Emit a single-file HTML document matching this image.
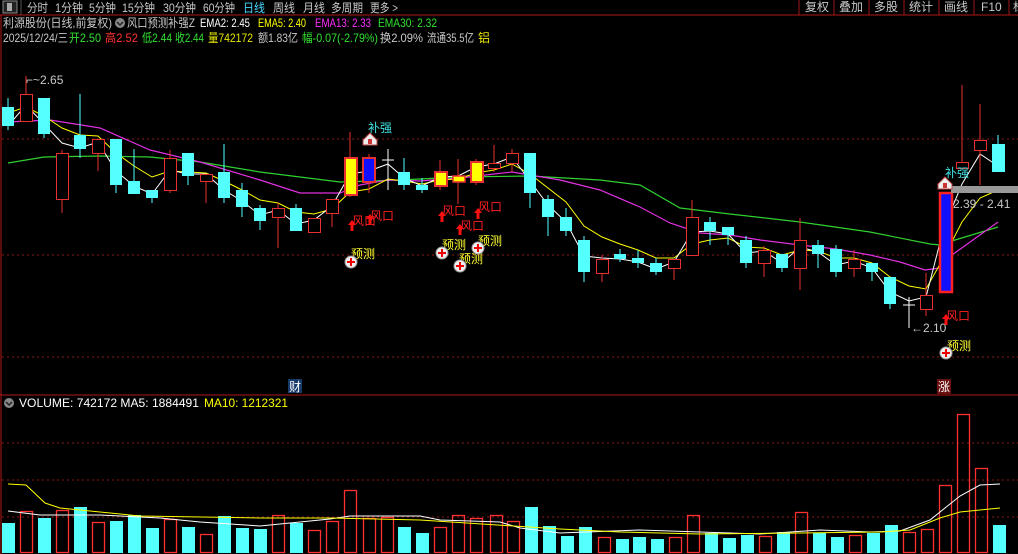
<!DOCTYPE html>
<html><head><meta charset="utf-8"><style>
html,body{margin:0;padding:0;background:#000;width:1018px;height:554px;overflow:hidden}
svg{display:block}
text{font-family:"Liberation Sans","Noto Sans CJK SC",sans-serif;font-size:12px}
</style></head><body>
<svg width="1018" height="554" viewBox="0 0 1018 554" xmlns="http://www.w3.org/2000/svg">
<rect width="1018" height="554" fill="#000"/>
<!-- top bar -->
<rect x="3" y="1" width="14" height="12" fill="#222" stroke="#888"/>
<rect x="7" y="3" width="5" height="8" fill="#aaa"/>
<line x1="21" y1="0" x2="21" y2="15" stroke="#555"/>
<g fill="#c8c8c8" lengthAdjust="spacingAndGlyphs">
<text x="27" y="12" textLength="21" lengthAdjust="spacingAndGlyphs">分时</text>
<text x="55" y="12" textLength="28" lengthAdjust="spacingAndGlyphs">1分钟</text>
<text x="89" y="12" textLength="27" lengthAdjust="spacingAndGlyphs">5分钟</text>
<text x="122" y="12" textLength="33" lengthAdjust="spacingAndGlyphs">15分钟</text>
<text x="163" y="12" textLength="33" lengthAdjust="spacingAndGlyphs">30分钟</text>
<text x="203" y="12" textLength="32" lengthAdjust="spacingAndGlyphs">60分钟</text>
<text x="243" y="12" fill="#4ad8ff" textLength="22" lengthAdjust="spacingAndGlyphs">日线</text>
<text x="273" y="12" textLength="22" lengthAdjust="spacingAndGlyphs">周线</text>
<text x="303" y="12" textLength="22" lengthAdjust="spacingAndGlyphs">月线</text>
<text x="331" y="12" textLength="32" lengthAdjust="spacingAndGlyphs">多周期</text>
<text x="370" y="12" textLength="28" lengthAdjust="spacingAndGlyphs">更多 &gt;</text>
<text x="805" y="11">复权</text><text x="839" y="11">叠加</text><text x="874" y="11">多股</text>
<text x="909" y="11">统计</text><text x="944" y="11">画线</text><text x="981" y="11">F10</text><text x="1013" y="11">标</text>
</g>
<g stroke="#a01818"><line x1="799" y1="0" x2="799" y2="15"/><line x1="834" y1="0" x2="834" y2="15"/><line x1="869" y1="0" x2="869" y2="15"/><line x1="904" y1="0" x2="904" y2="15"/><line x1="939" y1="0" x2="939" y2="15"/><line x1="974" y1="0" x2="974" y2="15"/><line x1="1009" y1="0" x2="1009" y2="15"/></g>
<line x1="0" y1="15" x2="1018" y2="15" stroke="#b01818"/>
<line x1="1" y1="15" x2="1" y2="554" stroke="#b01818"/>
<!-- info lines -->
<text x="3" y="27" fill="#c8c8c8" textLength="109" lengthAdjust="spacingAndGlyphs">利源股份(日线,前复权)</text>
<circle cx="120" cy="23" r="5" fill="#888"/><path d="M117 22 l3 3 l3 -3" stroke="#222" fill="none" stroke-width="1.5"/>
<text x="127" y="27" fill="#c8c8c8" textLength="68" lengthAdjust="spacingAndGlyphs">风口预测补强Z</text>
<text x="200" y="27" fill="#fff" textLength="50" lengthAdjust="spacingAndGlyphs">EMA2: 2.45</text>
<text x="258" y="27" fill="#ffff00" textLength="48" lengthAdjust="spacingAndGlyphs">EMA5: 2.40</text>
<text x="315" y="27" fill="#ff30ff" textLength="56" lengthAdjust="spacingAndGlyphs">EMA13: 2.33</text>
<text x="378" y="27" fill="#30e030" textLength="59" lengthAdjust="spacingAndGlyphs">EMA30: 2.32</text>
<text x="3" y="42" fill="#c8c8c8" textLength="65" lengthAdjust="spacingAndGlyphs">2025/12/24/三</text>
<text x="69" y="42" fill="#30e030" textLength="32" lengthAdjust="spacingAndGlyphs">开2.50</text>
<text x="105" y="42" fill="#ff3232" textLength="33" lengthAdjust="spacingAndGlyphs">高2.52</text>
<text x="142" y="42" fill="#30e030" textLength="30" lengthAdjust="spacingAndGlyphs">低2.44</text>
<text x="175" y="42" fill="#30e030" textLength="29" lengthAdjust="spacingAndGlyphs">收2.44</text>
<text x="208" y="42" fill="#e8e800" textLength="45" lengthAdjust="spacingAndGlyphs">量742172</text>
<text x="258" y="42" fill="#c8c8c8" textLength="40" lengthAdjust="spacingAndGlyphs">额1.83亿</text>
<text x="302" y="42" fill="#30e030" textLength="76" lengthAdjust="spacingAndGlyphs">幅-0.07(-2.79%)</text>
<text x="380" y="42" fill="#c8c8c8" textLength="43" lengthAdjust="spacingAndGlyphs">换2.09%</text>
<text x="427" y="42" fill="#c8c8c8" textLength="47" lengthAdjust="spacingAndGlyphs">流通35.5亿</text>
<text x="478" y="42" fill="#e8e800">铝</text>
<!-- grid -->
<g stroke="#8a1818" stroke-dasharray="2,3"><line x1="2" y1="139" x2="1018" y2="139"/><line x1="2" y1="255" x2="1018" y2="255"/><line x1="2" y1="357" x2="1018" y2="357"/>
<line x1="2" y1="443" x2="1018" y2="443"/><line x1="2" y1="480" x2="1018" y2="480"/><line x1="2" y1="517" x2="1018" y2="517"/></g>
<line x1="0" y1="395" x2="1018" y2="395" stroke="#b01818"/>
<!-- MA lines -->
<polyline fill="none" stroke="#30d030" stroke-width="1.2" points="8,163 44,157 100,156 150,157 200,162 260,172 300,177 340,182 400,180 460,177 530,176 600,180 640,185 680,208 730,214 800,222 870,232 930,244 940,245 955,240 998,227"/>
<polyline fill="none" stroke="#e030e0" stroke-width="1.2" points="8,122 50,120 100,128 150,150 200,162 260,180 300,193 340,193 360,185 388,180 420,181 460,178 494,174 512,172 530,175 560,180 600,190 640,207 670,223 700,233 730,235 760,240 800,245 836,249 870,255 900,262 925,270 940,268 952,255 998,222"/>
<polyline fill="none" stroke="#ffff00" stroke-width="1" points="8,113 26,107 44,116 62,128 80,135 98,136 116,153 134,166 152,177 170,171 188,172 206,173 224,181 242,190 260,200 278,203 296,212 314,214 332,209 350,192 369,189 388,179 404,181 422,184 440,180 458,179 476,173 494,170 512,164 530,174 548,188 566,202 584,226 602,237 620,244 638,250 656,258 674,258 692,244 710,240 728,238 746,247 764,248 782,255 800,250 818,251 836,258 854,258 872,263 890,277 909,286 926,289 944,257 962,222 980,198 998,190"/>
<polyline fill="none" stroke="#fff" stroke-width="1" points="8,126 26,105 44,124 62,143 80,148 98,142 116,171 134,186 152,194 170,170 188,174 206,174 224,190 242,201 260,215 278,210 296,224 314,220 332,206 350,174 369,171 388,164 404,178 422,186 440,177 458,176 476,167 494,164 512,157 530,181 548,205 566,222 584,256 602,258 620,259 638,262 656,269 674,262 692,232 710,231 728,234 746,253 764,251 782,263 800,247 818,252 836,265 854,261 872,268 890,292 909,301 926,297 944,227 962,184 980,154 998,166"/>
<!-- candles -->
<g>
<g fill="#54ffff" stroke="#54ffff">
<line x1="8" y1="98" x2="8" y2="130"/><rect x="2" y="107" width="12" height="19" stroke="none"/>
<line x1="44" y1="98" x2="44" y2="138"/><rect x="38" y="98" width="12" height="36" stroke="none"/>
<line x1="80" y1="94" x2="80" y2="158"/><rect x="74" y="135" width="12" height="14" stroke="none"/>
<line x1="116" y1="139" x2="116" y2="193"/><rect x="110" y="139" width="12" height="46" stroke="none"/>
<line x1="134" y1="149" x2="134" y2="194"/><rect x="128" y="181" width="12" height="13" stroke="none"/>
<line x1="152" y1="190" x2="152" y2="203"/><rect x="146" y="190" width="12" height="8" stroke="none"/>
<line x1="188" y1="153" x2="188" y2="185"/><rect x="182" y="153" width="12" height="23" stroke="none"/>
<line x1="224" y1="144" x2="224" y2="203"/><rect x="218" y="172" width="12" height="26" stroke="none"/>
<line x1="242" y1="183" x2="242" y2="217"/><rect x="236" y="190" width="12" height="17" stroke="none"/>
<line x1="260" y1="205" x2="260" y2="230"/><rect x="254" y="208" width="12" height="13" stroke="none"/>
<line x1="296" y1="204" x2="296" y2="231"/><rect x="290" y="208" width="12" height="23" stroke="none"/>
<line x1="404" y1="158" x2="404" y2="190"/><rect x="398" y="172" width="12" height="13" stroke="none"/>
<line x1="422" y1="178" x2="422" y2="193"/><rect x="416" y="185" width="12" height="5" stroke="none"/>
<line x1="530" y1="153" x2="530" y2="208"/><rect x="524" y="153" width="12" height="40" stroke="none"/>
<line x1="548" y1="195" x2="548" y2="236"/><rect x="542" y="199" width="12" height="18" stroke="none"/>
<line x1="566" y1="208" x2="566" y2="236"/><rect x="560" y="217" width="12" height="14" stroke="none"/>
<line x1="584" y1="236" x2="584" y2="282"/><rect x="578" y="240" width="12" height="32" stroke="none"/>
<line x1="620" y1="249" x2="620" y2="262"/><rect x="614" y="254" width="12" height="5" stroke="none"/>
<line x1="638" y1="250" x2="638" y2="268"/><rect x="632" y="258" width="12" height="5" stroke="none"/>
<line x1="656" y1="258" x2="656" y2="275"/><rect x="650" y="263" width="12" height="9" stroke="none"/>
<line x1="710" y1="217" x2="710" y2="245"/><rect x="704" y="222" width="12" height="9" stroke="none"/>
<line x1="728" y1="227" x2="728" y2="245"/><rect x="722" y="227" width="12" height="8" stroke="none"/>
<line x1="746" y1="236" x2="746" y2="268"/><rect x="740" y="240" width="12" height="23" stroke="none"/>
<line x1="782" y1="254" x2="782" y2="272"/><rect x="776" y="254" width="12" height="14" stroke="none"/>
<line x1="818" y1="240" x2="818" y2="268"/><rect x="812" y="245" width="12" height="9" stroke="none"/>
<line x1="836" y1="245" x2="836" y2="277"/><rect x="830" y="249" width="12" height="23" stroke="none"/>
<line x1="872" y1="263" x2="872" y2="281"/><rect x="866" y="263" width="12" height="9" stroke="none"/>
<line x1="890" y1="277" x2="890" y2="309"/><rect x="884" y="277" width="12" height="27" stroke="none"/>
<line x1="998" y1="135" x2="998" y2="172"/><rect x="992" y="144" width="13" height="28" stroke="none"/>
</g>
<g stroke="#e83030" fill="#000">
<line x1="26" y1="76" x2="26" y2="121"/><rect x="20.5" y="94.5" width="12" height="27"/>
<line x1="62" y1="150" x2="62" y2="213"/><rect x="56.5" y="153.5" width="12" height="46"/>
<line x1="98" y1="139" x2="98" y2="171"/><rect x="92.5" y="139.5" width="12" height="14"/>
<line x1="170" y1="150" x2="170" y2="193"/><rect x="164.5" y="158.5" width="12" height="32"/>
<line x1="206" y1="174" x2="206" y2="203"/><rect x="200.5" y="174.5" width="12" height="7"/>
<line x1="278" y1="203" x2="278" y2="248"/><rect x="272.5" y="208.5" width="12" height="9"/>
<line x1="314" y1="218" x2="314" y2="232"/><rect x="308.5" y="218.5" width="12" height="14"/>
<line x1="332" y1="199" x2="332" y2="227"/><rect x="326.5" y="199.5" width="12" height="14"/>
<line x1="494" y1="145" x2="494" y2="172"/><rect x="488.5" y="163.5" width="12" height="5"/>
<line x1="512" y1="149" x2="512" y2="172"/><rect x="506.5" y="153.5" width="12" height="10"/>
<line x1="602" y1="255" x2="602" y2="282"/><rect x="596.5" y="259.5" width="12" height="14"/>
<line x1="674" y1="259" x2="674" y2="280"/><rect x="668.5" y="259.5" width="12" height="9"/>
<line x1="692" y1="200" x2="692" y2="255"/><rect x="686.5" y="217.5" width="12" height="38"/>
<line x1="764" y1="246" x2="764" y2="277"/><rect x="758.5" y="250.5" width="12" height="13"/>
<line x1="800" y1="218" x2="800" y2="290"/><rect x="794.5" y="240.5" width="12" height="28"/>
<line x1="854" y1="250" x2="854" y2="277"/><rect x="848.5" y="259.5" width="12" height="9"/>
<line x1="926" y1="273" x2="926" y2="316"/><rect x="920.5" y="295.5" width="12" height="14"/>
<line x1="962" y1="85" x2="962" y2="168"/><rect x="956.5" y="162.5" width="12" height="6"/>
<line x1="980" y1="104" x2="980" y2="185"/><rect x="974.5" y="140.5" width="12" height="10"/>
</g>
<line x1="350" y1="132" x2="350" y2="197" stroke="#e83030"/><rect x="345" y="158" width="12" height="37" fill="#ffff00" stroke="#e83030" stroke-width="2"/>
<line x1="369" y1="154" x2="369" y2="193" stroke="#e83030"/><rect x="363" y="158" width="12" height="24" fill="#1010ff" stroke="#e83030" stroke-width="2"/>
<line x1="440" y1="160" x2="440" y2="190" stroke="#e83030"/><rect x="435" y="172" width="12" height="14" fill="#ffff00" stroke="#e83030" stroke-width="2"/>
<line x1="458" y1="159" x2="458" y2="204" stroke="#e83030"/><rect x="453" y="176" width="12" height="6" fill="#ffff00" stroke="#e83030" stroke-width="1.5"/>
<line x1="476" y1="159" x2="476" y2="185" stroke="#e83030"/><rect x="471" y="162" width="12" height="20" fill="#ffff00" stroke="#e83030" stroke-width="2"/>
<rect x="940" y="193" width="12" height="99" fill="#1010ff" stroke="#ff2020" stroke-width="2.5"/>
<g stroke="#fff"><line x1="388" y1="149" x2="388" y2="190"/><line x1="382" y1="160" x2="394" y2="160"/>
<line x1="909" y1="297" x2="909" y2="328"/><line x1="903" y1="305" x2="915" y2="305"/></g>
</g>
<!-- labels -->
<text x="26" y="84" fill="#c8c8c8" font-size="11">⌐~2.65</text>
<text x="911" y="332" fill="#c8c8c8" font-size="11">←2.10</text>
<rect x="951" y="186" width="67" height="7" fill="#999"/>
<text x="953" y="208" fill="#c8c8c8" font-size="11">2.39 - 2.41</text>
<!-- signals -->
<g font-size="12">
<text x="368" y="132" fill="#40e0e0">补强</text>
<text x="945" y="177" fill="#40e0e0">补强</text>
<g fill="#ff2020">
<text x="352" y="225">风口</text><text x="370" y="220">风口</text><text x="442" y="215">风口</text><text x="460" y="230">风口</text><text x="478" y="211">风口</text><text x="946" y="320">风口</text>
</g>
<g fill="#ffff30">
<text x="351" y="258">预测</text><text x="442" y="249">预测</text><text x="459" y="263">预测</text><text x="478" y="245">预测</text><text x="947" y="350">预测</text>
</g>
</g>
<g fill="#ff1010">
<path d="M352 220 l-4 5 h2.5 v6 h3 v-6 h2.5z"/><path d="M370 214 l-4 5 h2.5 v6 h3 v-6 h2.5z"/><path d="M442 211 l-4 5 h2.5 v6 h3 v-6 h2.5z"/><path d="M460 224 l-4 5 h2.5 v6 h3 v-6 h2.5z"/><path d="M478 208 l-4 5 h2.5 v6 h3 v-6 h2.5z"/><path d="M946 314 l-4 5 h2.5 v6 h3 v-6 h2.5z"/>
</g>
<g>
<circle cx="351" cy="262" r="6" fill="#eee" stroke="#999"/><path d="M347 262h8M351 258v8" stroke="#e00" stroke-width="2"/>
<circle cx="442" cy="253" r="6" fill="#eee" stroke="#999"/><path d="M438 253h8M442 249v8" stroke="#e00" stroke-width="2"/>
<circle cx="460" cy="266" r="6" fill="#eee" stroke="#999"/><path d="M456 266h8M460 262v8" stroke="#e00" stroke-width="2"/>
<circle cx="478" cy="248" r="6" fill="#eee" stroke="#999"/><path d="M474 248h8M478 244v8" stroke="#e00" stroke-width="2"/>
<circle cx="946" cy="353" r="6" fill="#eee" stroke="#999"/><path d="M942 353h8M946 349v8" stroke="#e00" stroke-width="2"/>
</g>
<g>
<path d="M363 140 l7 -7 l7 7 v5 h-14z" fill="#eee" stroke="#b44"/><rect x="368" y="139" width="4" height="5" fill="#c33"/>
<path d="M938 184 l7 -7 l7 7 v5 h-14z" fill="#eee" stroke="#b44"/><rect x="943" y="183" width="4" height="5" fill="#c33"/>
</g>
<rect x="288" y="379" width="14" height="14" fill="#163a6a"/><text x="289" y="391" fill="#fff">财</text>
<rect x="937" y="379" width="14" height="15" fill="#6a1010"/><text x="938" y="391" fill="#fff">涨</text>
<!-- volume header -->
<circle cx="9" cy="403" r="5" fill="#888"/><path d="M6 402 l3 3 l3 -3" stroke="#222" fill="none" stroke-width="1.5"/>
<text x="19" y="407" fill="#fff" textLength="180" lengthAdjust="spacingAndGlyphs">VOLUME: 742172  MA5: 1884491</text>
<text x="204" y="407" fill="#ffff00" textLength="84" lengthAdjust="spacingAndGlyphs">MA10: 1212321</text>
<!-- volume bars -->
<g fill="#54ffff">
<rect x="2" y="523" width="13" height="30"/><rect x="38" y="518" width="13" height="35"/><rect x="74" y="507" width="13" height="46"/>
<rect x="110" y="521" width="13" height="32"/><rect x="128" y="515" width="13" height="38"/><rect x="146" y="528" width="13" height="25"/>
<rect x="182" y="527" width="13" height="26"/><rect x="218" y="516" width="13" height="37"/><rect x="236" y="528" width="13" height="25"/>
<rect x="254" y="529" width="13" height="24"/><rect x="290" y="523" width="13" height="30"/><rect x="398" y="527" width="13" height="26"/>
<rect x="416" y="533" width="13" height="20"/><rect x="525" y="507" width="13" height="46"/><rect x="543" y="526" width="13" height="27"/>
<rect x="561" y="536" width="13" height="17"/><rect x="579" y="527" width="13" height="26"/><rect x="616" y="539" width="13" height="14"/>
<rect x="633" y="537" width="13" height="16"/><rect x="651" y="539" width="13" height="14"/><rect x="705" y="533" width="13" height="20"/>
<rect x="723" y="538" width="13" height="15"/><rect x="741" y="535" width="13" height="18"/><rect x="777" y="532" width="13" height="21"/>
<rect x="813" y="533" width="13" height="20"/><rect x="831" y="537" width="13" height="16"/><rect x="867" y="533" width="13" height="20"/>
<rect x="885" y="525" width="13" height="28"/><rect x="993" y="525" width="13" height="28"/>
</g>
<g fill="none" stroke="#ff3030" stroke-width="1.3">
<rect x="20.5" y="511.5" width="12" height="41"/><rect x="56.5" y="510.5" width="12" height="42"/><rect x="92.5" y="522.5" width="12" height="30"/>
<rect x="164.5" y="519.5" width="12" height="33"/><rect x="200.5" y="534.5" width="12" height="18"/><rect x="272.5" y="515.5" width="12" height="37"/>
<rect x="308.5" y="530.5" width="12" height="22"/><rect x="326.5" y="521.5" width="12" height="31"/><rect x="344.5" y="490.5" width="12" height="62"/>
<rect x="363.5" y="518.5" width="12" height="34"/><rect x="381.5" y="517.5" width="12" height="35"/><rect x="434.5" y="527.5" width="12" height="25"/>
<rect x="452.5" y="515.5" width="12" height="37"/><rect x="470.5" y="518.5" width="12" height="34"/><rect x="490.5" y="515.5" width="12" height="37"/>
<rect x="507.5" y="521.5" width="12" height="31"/><rect x="598.5" y="537.5" width="12" height="15"/><rect x="669.5" y="537.5" width="12" height="15"/>
<rect x="687.5" y="515.5" width="12" height="37"/><rect x="759.5" y="536.5" width="12" height="16"/><rect x="795.5" y="512.5" width="12" height="40"/>
<rect x="849.5" y="535.5" width="12" height="17"/><rect x="903.5" y="532.5" width="12" height="20"/><rect x="921.5" y="529.5" width="12" height="23"/>
<rect x="939.5" y="485.5" width="12" height="67"/><rect x="957.5" y="414.5" width="12" height="138"/><rect x="975.5" y="468.5" width="12" height="84"/>
</g>
<polyline fill="none" stroke="#fff" stroke-width="1" points="8,511 40,515 100,515 160,518 200,522 260,526 330,519 350,516 420,516 440,520 500,522 520,528 560,533 640,530 700,532 760,534 820,530 870,532 900,531 930,520 960,496 980,485 1000,484"/>
<polyline fill="none" stroke="#ffff00" stroke-width="1" points="8,484 26,485 45,503 60,508 100,512 140,516 260,518 330,518 420,520 560,529 620,532 700,534 800,533 880,532 910,530 940,518 960,512 1000,508"/>
</svg>
</body></html>
